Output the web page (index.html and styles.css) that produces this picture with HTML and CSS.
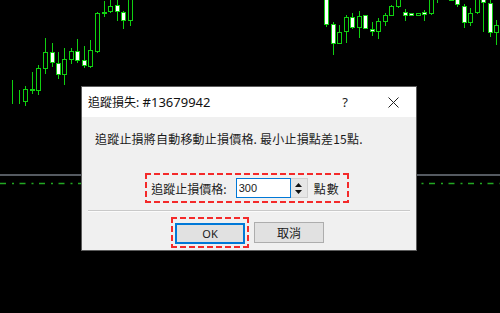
FILE: index.html
```html
<!DOCTYPE html>
<html lang="zh-Hant">
<head>
  <meta charset="UTF-8" />
  <meta name="viewport" content="width=device-width, initial-scale=1.0"/>
  <title>追蹤損失</title>
  <link rel="stylesheet" href="styles.css">
</head>
<body>
  <!-- Chart canvas -->
  <svg class="chart" width="500" height="313" viewBox="0 0 500 313">
    <path class="grid" d="M0 175H500" />
    <path class="level" d="M0 183.5H500" />
    <path class="wick" d="M12.5 80V104M19.5 90V104M25.5 86V106M32.5 72V94M38.5 65V95M45.5 38V74M52.5 43V67M58.5 52V79M64.5 48V85M71.5 48V64M77.5 39V63M84.5 46V68M90.5 40V68M97.5 12V53M104.5 1V17M110.5 0V13M117.5 0V21M123.5 11V29M130.5 0V26
      M326.5 0V27M333.5 22V55M339.5 25V44M346.5 15V43M352.5 13V29M359.5 11V38M365.5 15V29M372.5 22V36M378.5 18V39M385.5 13V26M391.5 5V16M398.5 0V8M405.5 9V21M411.5 13V16M418.5 13V16M424.5 10V21M431.5 0V15M437.5 0V3M451.5 0V1M457.5 0V7M464.5 4V28M470.5 8V26M477.5 0V14M483.5 0V32M490.5 0V37M496.5 20V45" />
    <g class="candles">
      <rect class="bear" x="23.5" y="89.5" width="4" height="12" />
      <rect class="bear" x="30.5" y="89.5" width="4" height="1" />
      <rect class="bear" x="36.5" y="68.5" width="4" height="22" />
      <rect class="bear" x="43.5" y="52.5" width="4" height="16" />
      <rect class="bull" x="50.5" y="52.5" width="4" height="10" />
      <rect class="bull" x="56.5" y="63.5" width="4" height="11" />
      <rect class="bear" x="62.5" y="59.5" width="4" height="15" />
      <rect class="bear" x="69.5" y="51.5" width="4" height="8" />
      <rect class="bull" x="75.5" y="51.5" width="4" height="9" />
      <rect class="bull" x="82.5" y="60.5" width="4" height="5" />
      <rect class="bear" x="88.5" y="50.5" width="4" height="16" />
      <rect class="bear" x="95.5" y="13.5" width="4" height="38" />
      <rect class="bear" x="102.5" y="12.5" width="4" height="1" />
      <rect class="bear" x="108.5" y="6.5" width="4" height="5" />
      <rect class="bull" x="115.5" y="5.5" width="4" height="6" />
      <rect class="bull" x="121.5" y="12.5" width="4" height="8" />
      <rect class="bear" x="128.5" y="-0.5" width="4" height="21" />

      <rect class="bull" x="324.5" y="-0.5" width="4" height="25" />
      <rect class="bull" x="331.5" y="24.5" width="4" height="19" />
      <rect class="bear" x="337.5" y="32.5" width="4" height="11" />
      <rect class="bear" x="344.5" y="17.5" width="4" height="14" />
      <rect class="bull" x="350.5" y="17.5" width="4" height="10" />
      <rect class="bear" x="357.5" y="16.5" width="4" height="11" />
      <rect class="bull" x="363.5" y="15.5" width="4" height="13" />
      <rect class="bull" x="370.5" y="29.5" width="4" height="2" />
      <rect class="bear" x="376.5" y="21.5" width="4" height="10" />
      <rect class="bear" x="383.5" y="15.5" width="4" height="6" />
      <rect class="bear" x="389.5" y="6.5" width="4" height="9" />
      <rect class="bear" x="396.5" y="-0.5" width="4" height="7" />
      <rect class="bull" x="403.5" y="12.5" width="4" height="3" />
      <rect class="bull" x="409.5" y="13.5" width="4" height="2" />
      <rect class="bear" x="416.5" y="13.5" width="4" height="2" />
      <rect class="bull" x="422.5" y="12.5" width="4" height="2" />
      <rect class="bear" x="429.5" y="-0.5" width="4" height="14" />
      <rect class="bull" x="449.5" y="-1.5" width="4" height="2" />
      <rect class="bull" x="455.5" y="-0.5" width="4" height="5" />
      <rect class="bull" x="462.5" y="6.5" width="4" height="16" />
      <rect class="bear" x="468.5" y="13.5" width="4" height="9" />
      <rect class="bear" x="475.5" y="-0.5" width="4" height="13" />
      <rect class="bull" x="481.5" y="-0.5" width="4" height="3" />
      <rect class="bull" x="488.5" y="3.5" width="4" height="29" />
      <rect class="bear" x="494.5" y="25.5" width="4" height="7" />
    </g>
  </svg>

  <!-- Trailing stop dialog -->
  <div class="dialog">
    <div class="titlebar">
      <span class="title"><span class="cjk">追蹤損失:</span> #13679942</span>
      <span class="help">?</span>
      <span class="close">
        <svg width="11" height="11" viewBox="0 0 11 11"><path d="M0.5 0.5L10.5 10.5M10.5 0.5L0.5 10.5" /></svg>
      </span>
    </div>

    <div class="content">
      <p class="message">追蹤止損將自動移動止損價格. 最小止損點差15點.</p>

      <div class="param-row">
        <div class="param marked">
          <label class="param-label">追蹤止損價格:</label>
          <div class="spin">
            <input class="spin-input" type="text" value="300" />
            <div class="spin-btns">
              <svg width="7" height="4" viewBox="0 0 7 4"><path d="M0 4L3.5 0L7 4Z" /></svg>
              <svg width="7" height="4" viewBox="0 0 7 4"><path d="M0 0L3.5 4L7 0Z" /></svg>
            </div>
          </div>
          <span class="unit">點數</span>
        </div>
      </div>

      <hr class="sep" />

      <div class="buttons">
        <div class="ok-wrap marked">
          <button class="btn btn-default">OK</button>
        </div>
        <button class="btn">取消</button>
      </div>
    </div>
  </div>
</body>
</html>
```

FILE: styles.css
```css
* {
  box-sizing: border-box;
}

body {
  margin: 0;
  width: 500px;
  height: 313px;
  overflow: hidden;
  position: relative;
  background: #000;
  font-family: "Noto Sans", "Noto Sans CJK TC", sans-serif;
  color: #1a1a1a;
}

/* chart */
.chart {
  position: absolute;
  left: 0;
  top: 0;
}

.grid {
  stroke: #555a61;
  stroke-width: 2;
}

.level {
  stroke: #22a822;
  stroke-width: 1.4;
  stroke-dasharray: 6 6 2 5.5;
}

.wick {
  stroke: #10d010;
  stroke-width: 1;
  fill: none;
}

.candles rect {
  stroke: #10d010;
  stroke-width: 1;
}

.bull {
  fill: #fff;
}

.bear {
  fill: #000;
}

/* dialog window */
.dialog {
  position: absolute;
  left: 81px;
  top: 86px;
  width: 336px;
  height: 165px;
  border: 1px solid #5c5c5c;
  background: #f0f0f0;
  display: flex;
  flex-direction: column;
}

.titlebar {
  height: 30px;
  background: #fff;
  display: flex;
  align-items: center;
  padding-left: 6px;
}

.title {
  flex: 1;
  font-size: 13px;
  color: #111;
}

.title .cjk {
  font-size: 12px;
}

.help {
  width: 46px;
  margin-right: 2px;
  text-align: center;
  font-size: 13px;
  color: #222;
}

.close {
  width: 46px;
  height: 30px;
  display: flex;
  align-items: center;
  justify-content: center;
}

.close path {
  stroke: #222;
  stroke-width: 1;
}

.content {
  flex: 1;
}

.message {
  margin: 0 0 0 13px;
  padding-top: 14px;
  font-family: "Noto Sans CJK TC", sans-serif;
  font-size: 12px;
  line-height: 16px;
  letter-spacing: 0.2px;
}

/* red dashed highlight */
.marked {
  background:
    repeating-linear-gradient(90deg, #f42a2a 0 6px, transparent 6px 9px) top left / 100% 2px no-repeat,
    repeating-linear-gradient(90deg, #f42a2a 0 6px, transparent 6px 9px) bottom left / 100% 2px no-repeat,
    repeating-linear-gradient(180deg, #f42a2a 0 6px, transparent 6px 9px) top left / 2px 100% no-repeat,
    repeating-linear-gradient(180deg, #f42a2a 0 6px, transparent 6px 9px) top right / 2px 100% no-repeat;
}

.param-row {
  margin-top: 26px;
  display: flex;
  justify-content: center;
  padding-right: 4px;
}

.param {
  height: 30px;
  display: flex;
  align-items: center;
  padding: 0 9px 0 6px;
  font-family: "Noto Sans CJK TC", sans-serif;
  font-size: 12px;
}

.param-label {
  margin-right: 9px;
}

.spin {
  display: flex;
  height: 20px;
  margin-right: 6px;
}

.spin-input {
  width: 55px;
  height: 20px;
  border: 1px solid #0078d7;
  padding: 0 2px;
  font-family: "Liberation Sans", sans-serif;
  font-size: 11px;
  color: #1a1a1a;
  outline: none;
}

.spin-btns {
  width: 17px;
  background: #e6e6e6;
  border: 1px solid #cfcfcf;
  border-left: none;
  display: flex;
  flex-direction: column;
  align-items: center;
  justify-content: space-around;
  padding: 2px 0;
}

.spin-btns path {
  fill: #111;
}

.unit {
  font-size: 12px;
  letter-spacing: 1px;
}

.sep {
  margin: 7px 6px 0;
  height: 0;
  border: none;
  border-top: 1px solid #c9c9c9;
  border-bottom: 1px solid #fbfbfb;
}

.buttons {
  margin-top: 5px;
  display: flex;
  align-items: center;
  padding-left: 89px;
}

.ok-wrap {
  padding: 4px;
}

.btn {
  width: 70px;
  height: 21px;
  padding: 0;
  background: #e1e1e1;
  border: 1px solid #adadad;
  font-family: "Noto Sans", "Noto Sans CJK TC", sans-serif;
  font-size: 12px;
  color: #1a1a1a;
}

.btn-default {
  border: 2px solid #0078d7;
  font-size: 11px;
}

.ok-wrap + .btn {
  margin-left: 5px;
}
```
